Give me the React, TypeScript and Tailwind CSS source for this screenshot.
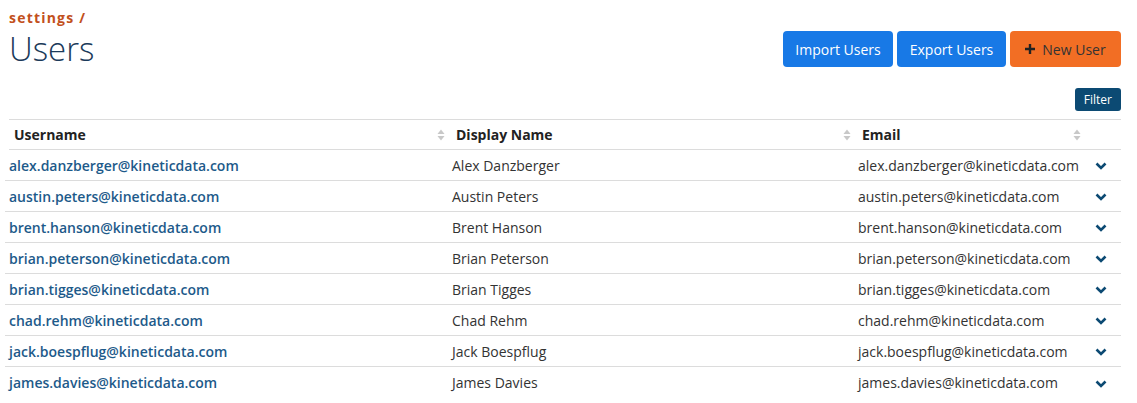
const users = [
  ["alex.danzberger@kineticdata.com", "Alex Danzberger"],
  ["austin.peters@kineticdata.com", "Austin Peters"],
  ["brent.hanson@kineticdata.com", "Brent Hanson"],
  ["brian.peterson@kineticdata.com", "Brian Peterson"],
  ["brian.tigges@kineticdata.com", "Brian Tigges"],
  ["chad.rehm@kineticdata.com", "Chad Rehm"],
  ["jack.boespflug@kineticdata.com", "Jack Boespflug"],
  ["james.davies@kineticdata.com", "James Davies"],
];

function SortIcon() {
  return (
    <svg width="8" height="12" viewBox="0 0 8 12" className="shrink-0">
      <path d="M4 0.5 L7.5 5 H0.5 Z" fill="#c8c8c8" />
      <path d="M4 11.5 L7.5 7 H0.5 Z" fill="#c8c8c8" />
    </svg>
  );
}

function Chevron() {
  return (
    <svg width="12" height="8" viewBox="0 0 12 8">
      <path d="M1.5 1.5 L6 6 L10.5 1.5" fill="none" stroke="#0c4a73" strokeWidth="2.6" />
    </svg>
  );
}

export default function App() {
  return (
    <div className="w-[1137px] h-[403px] overflow-hidden bg-white font-['Open_Sans',sans-serif] text-[14px] text-[#333]">
      <div className="flex items-start justify-between pl-[9px] pr-4 pt-[7px]">
        <div>
          <div className="text-[14px] font-bold tracking-[1.2px] text-[#c2501c] leading-[22px]">
            settings /
          </div>
          <h1 className="text-[33px] font-light text-[#1b3a5a] leading-[40px]">Users</h1>
        </div>
        <div className="flex gap-1 mt-[24px]">
          <button className="h-9 w-[110px] rounded bg-[#1879e6] text-white text-[14px]">
            Import Users
          </button>
          <button className="h-9 w-[109px] rounded bg-[#1879e6] text-white text-[14px]">
            Export Users
          </button>
          <button className="h-9 w-[111px] rounded bg-[#f26e24] text-[#333] text-[14px] flex items-center justify-center gap-[7px]">
            <svg width="10" height="10" viewBox="0 0 10 10">
              <path d="M5 0 V10 M0 5 H10" stroke="#222" strokeWidth="2.4" />
            </svg>
            New User
          </button>
        </div>
      </div>
      <div className="flex justify-end pr-4 mt-[19px]">
        <button className="h-[23px] px-[9px] rounded-[3px] bg-[#0c4a73] text-white text-[12px]">
          Filter
        </button>
      </div>
      <div className="mt-[8px] pl-[5px] pr-4">
        <div className="ml-1 grid grid-cols-[440px_406px_230px_36px] h-[31px] items-center border-y border-[#dcdcdc] font-bold text-[#222]">
          <div className="flex items-center justify-between pl-[5px] pr-1">
            <span>Username</span>
            <SortIcon />
          </div>
          <div className="flex items-center justify-between pl-[7px] pr-1">
            <span>Display Name</span>
            <SortIcon />
          </div>
          <div className="flex items-center justify-between pl-[7px] pr-1">
            <span>Email</span>
            <SortIcon />
          </div>
          <div />
        </div>
        {users.map(([email, name]) => (
          <div
            key={email}
            className="grid grid-cols-[443px_406px_232px_32px] h-[31px] items-center border-b border-[#dcdcdc] last:border-b-0"
          >
            <div className="pl-1 font-semibold text-[#1d5a8a]">{email}</div>
            <div className="pl-[4px]">{name}</div>
            <div className="pl-[4px]">{email}</div>
            <div className="flex pl-[9px] pt-[2px]">
              <Chevron />
            </div>
          </div>
        ))}
      </div>
    </div>
  );
}
